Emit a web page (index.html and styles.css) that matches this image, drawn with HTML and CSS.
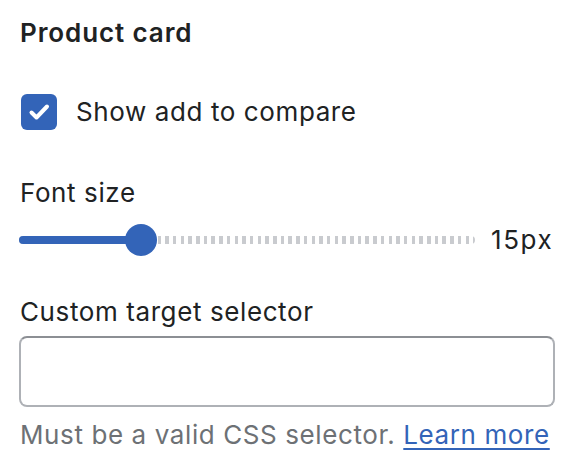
FILE: index.html
```html
<!DOCTYPE html>
<html>
<head>
<meta charset="utf-8">
<link rel="stylesheet" href="styles.css">
</head>
<body>
<div class="panel">
  <h2 class="title">Product card</h2>
  <label class="check-row">
    <span class="checkbox">
      <svg width="36" height="36" viewBox="0 0 36 36"><polyline points="10.5,18.5 15.5,23.5 26,12.5" fill="none" stroke="#fff" stroke-width="4" stroke-linecap="round" stroke-linejoin="round"/></svg>
    </span>
    <span class="check-label">Show add to compare</span>
  </label>
  <div class="label label-font">Font size</div>
  <div class="slider-row">
    <div class="slider">
      <div class="track"></div>
      <div class="fill" style="width:122px"></div>
      <div class="thumb" style="left:106px"></div>
    </div>
    <span class="value">15px</span>
  </div>
  <div class="label label-custom">Custom target selector</div>
  <div class="input"></div>
  <p class="help">Must be a valid CSS selector. <a class="link" href="#">Learn more</a></p>
</div>
</body>
</html>
```

FILE: styles.css
```css
* { box-sizing: border-box; }
html, body { margin: 0; padding: 0; background: #fff; }
body {
  font-family: Inter, "Noto Sans", sans-serif;
  font-size: 26px;
  letter-spacing: 0.6px;
  color: #202223;
}
.panel {
  padding: 13px 19px 0 19px;
  display: flex;
  flex-direction: column;
}
.title {
  margin: 0;
  font-size: 26px;
  font-weight: 600;
  line-height: 40px;
  letter-spacing: 0.9px;
  padding-left: 1px;
}
.check-row {
  margin-top: 41px;
  display: flex;
  align-items: center;
  gap: 19px;
  height: 36px;
  padding-left: 2px;
}
.checkbox {
  width: 36px;
  height: 36px;
  border-radius: 6px;
  background: #3364b8;
  display: block;
  flex: none;
}
.checkbox svg { display: block; }
.check-label { line-height: 36px; }
.label {
  line-height: 40px;
  padding-left: 1px;
}
.label-font { margin-top: 43px; }
.slider-row {
  margin-top: 11px;
  height: 32px;
  display: flex;
  align-items: center;
  gap: 16px;
}
.slider {
  flex: 1;
  position: relative;
  height: 32px;
}
.track {
  position: absolute;
  left: 0; right: 0;
  top: 12px;
  height: 8px;
  border-radius: 4px;
  background: repeating-linear-gradient(to right, #c9cbcf 0 3.5px, transparent 3.5px 7.7px);
}
.fill {
  position: absolute;
  left: 0;
  top: 12px;
  height: 8px;
  border-radius: 4px 0 0 4px;
  background: #3364b8;
}
.thumb {
  position: absolute;
  top: 0;
  width: 32px;
  height: 32px;
  border-radius: 50%;
  background: #3364b8;
}
.value {
  line-height: 32px;
  width: 64px;
  letter-spacing: 1.6px;
}
.label-custom { margin-top: 36px; }
.input {
  margin-top: 4px;
  height: 71px;
  border: 2px solid #aeb1b6;
  border-top-color: #8c8f94;
  border-radius: 8px;
  background: #fff;
}
.help {
  margin: 8px 0 0 0;
  line-height: 40px;
  color: #6d7175;
  padding-left: 1px;
}
.link {
  color: #3364b8;
  text-decoration: underline;
  text-underline-offset: 4px;
  text-decoration-thickness: 2px;
}
```
